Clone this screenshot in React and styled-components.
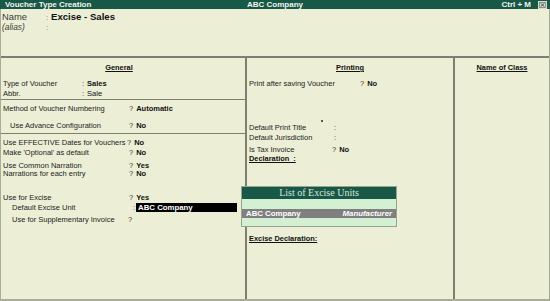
import React from 'react';
import styled, { createGlobalStyle } from 'styled-components';

const GlobalStyle = createGlobalStyle`
  html, body {
    margin: 0;
    padding: 0;
    background: #ecefd6;
  }
`;

const Screen = styled.div`
  position: relative;
  width: 550px;
  height: 301px;
  overflow: hidden;
  background: #ecefd6;
  font-family: "Liberation Sans", Arial, sans-serif;
  color: #1d1d1d;
  display: flex;
  flex-direction: column;
`;

const TitleBar = styled.div`
  height: 9px;
  background: #175846;
  color: #f2f5ee;
  display: flex;
  align-items: center;
  font-size: 8px;
  font-weight: bold;
  line-height: 9px;
  padding-left: 5px;
`;

const TitleText = styled.div`
  width: 242px;
`;

const TitleCompany = styled.div`
  flex: 1;
`;

const Shortcut = styled.div`
  margin-right: 7px;
`;

const CloseBox = styled.div`
  width: 9px;
  height: 8px;
  background: #d8dcd0;
  margin-right: 3px;
  display: flex;
  align-items: center;
  justify-content: center;
`;

const Frame = styled.div`
  flex: 1;
  display: flex;
  flex-direction: column;
  border-left: 1px solid #a9ad98;
  border-right: 1px solid #a9ad98;
  border-bottom: 2px solid #a9ad98;
`;

const Header = styled.div`
  height: 49px;
  padding: 3px 0 0 1px;
  box-sizing: border-box;
  border-bottom: 2px solid #7c8070;
`;

const NameRow = styled.div`
  display: flex;
  align-items: baseline;
  height: ${p => p.$h || 10}px;
  line-height: ${p => p.$h || 10}px;
`;

const NameLabel = styled.div`
  width: 44px;
  font-size: ${p => (p.$alias ? 8.4 : 9.4)}px;
  font-style: ${p => (p.$alias ? 'italic' : 'normal')};
  color: #3a3a3a;
`;

const Colon = styled.span`
  color: #777;
  font-size: 8px;
  width: 5px;
`;

const NameValue = styled.div`
  font-size: 9.6px;
  font-weight: bold;
  color: #111;
`;

const Columns = styled.div`
  flex: 1;
  display: flex;
`;

const Column = styled.div`
  width: ${p => p.$w ? `${p.$w}px` : 'auto'};
  flex: ${p => p.$w ? 'none' : 1};
  border-right: ${p => p.$last ? 'none' : '2px solid #7c8070'};
  display: flex;
  flex-direction: column;
  box-sizing: border-box;
`;

const Section = styled.div`
  padding: ${p => p.$pt || 0}px 0 ${p => p.$pb || 0}px;
  border-bottom: ${p => p.$line ? '1px solid #7c8070' : 'none'};
`;

const Heading = styled.div`
  text-align: center;
  font-size: 7.4px;
  font-weight: bold;
  text-decoration: underline;
  line-height: 10px;
  height: 10px;
  padding-right: ${p => p.$shift || 0}px;
  color: #111;
`;

const Row = styled.div`
  display: flex;
  align-items: center;
  height: ${p => p.$h || 10}px;
  margin-top: ${p => p.$mt || 0}px;
  padding-left: ${p => p.$indent || 2}px;
  font-size: 7.5px;
  white-space: nowrap;
`;

const Label = styled.div`
  width: ${p => p.$w}px;
  flex: none;
  color: #222;
`;

const Mark = styled.span`
  color: #333;
  margin-right: 3px;
`;

const Value = styled.span`
  font-weight: ${p => (p.$plain ? 'normal' : 'bold')};
  color: #111;
`;

const Selected = styled.span`
  display: inline-block;
  margin-left: -2px;
  width: 101px;
  height: 9px;
  line-height: 9px;
  background: #000;
  color: #fff;
  font-weight: bold;
  font-size: 7.8px;
  padding-left: 2px;
  box-sizing: border-box;
`;

const SubHeading = styled.div`
  font-size: 7.4px;
  font-weight: bold;
  text-decoration: underline;
  line-height: 10px;
  height: 10px;
  margin-top: ${p => p.$mt || 0}px;
  padding-left: 2px;
  color: #111;
`;

const Speck = styled.div`
  width: 2px;
  height: 2px;
  background: #555;
  margin: 32px 0 0 74px;
`;

const Popup = styled.div`
  position: absolute;
  left: 241px;
  top: 186px;
  width: 156px;
  border: 1px solid #96a493;
  background: #d4f0d2;
  display: flex;
  flex-direction: column;
  box-sizing: border-box;
`;

const PopupTitle = styled.div`
  height: 12px;
  line-height: 12px;
  background: #175846;
  color: #dce6dc;
  font-family: "Liberation Serif", "Times New Roman", serif;
  font-size: 10px;
  text-align: center;
`;

const PopupRow = styled.div`
  height: ${p => p.$h}px;
  display: flex;
  align-items: center;
  justify-content: space-between;
  padding: 0 4px;
  background: ${p => (p.$active ? '#7f7f7f' : '#d4f0d2')};
  color: #fff;
  font-size: 7.8px;
  font-weight: bold;
`;

const Kind = styled.span`
  font-style: italic;
`;

export default function App() {
  return (
    <>
      <GlobalStyle />
      <Screen>
        <TitleBar>
          <TitleText>Voucher Type Creation</TitleText>
          <TitleCompany>ABC Company</TitleCompany>
          <Shortcut>Ctrl + M</Shortcut>
          <CloseBox>
            <svg width="7" height="6" viewBox="0 0 7 6">
              <rect x="0.5" y="0.5" width="6" height="5" fill="none" stroke="#7a7f78" strokeWidth="0.8" />
              <path d="M1.6 1.3 L5.4 4.7 M5.4 1.3 L1.6 4.7" stroke="#3d433f" strokeWidth="0.9" />
            </svg>
          </CloseBox>
        </TitleBar>
        <Frame>
          <Header>
            <NameRow $h={10}>
              <NameLabel>Name</NameLabel>
              <Colon>:</Colon>
              <NameValue>Excise - Sales</NameValue>
            </NameRow>
            <NameRow $h={10}>
              <NameLabel $alias>(alias)</NameLabel>
              <Colon>:</Colon>
            </NameRow>
          </Header>
          <Columns>
            <Column $w={246}>
              <Section $pt={5} $pb={1} $line>
                <Heading $shift={8}>General</Heading>
                <Row $mt={5}>
                  <Label $w={79}>Type of Voucher</Label>
                  <Mark>:</Mark><Value>Sales</Value>
                </Row>
                <Row>
                  <Label $w={79}>Abbr.</Label>
                  <Mark>:</Mark><Value $plain>Sale</Value>
                </Row>
              </Section>
              <Section $pt={3} $pb={3} $line>
                <Row>
                  <Label $w={126}>Method of Voucher Numbering</Label>
                  <Mark>?</Mark><Value>Automatic</Value>
                </Row>
                <Row $mt={7} $indent={9}>
                  <Label $w={119}>Use Advance Configuration</Label>
                  <Mark>?</Mark><Value>No</Value>
                </Row>
              </Section>
              <Section $pt={3}>
                <Row>
                  <Label $w={124}>Use EFFECTIVE Dates for Vouchers</Label>
                  <Mark>?</Mark><Value>No</Value>
                </Row>
                <Row>
                  <Label $w={126}>Make 'Optional' as default</Label>
                  <Mark>?</Mark><Value>No</Value>
                </Row>
                <Row $mt={4} $h={8}>
                  <Label $w={126}>Use Common Narration</Label>
                  <Mark>?</Mark><Value>Yes</Value>
                </Row>
                <Row $h={8}>
                  <Label $w={126}>Narrations for each entry</Label>
                  <Mark>?</Mark><Value>No</Value>
                </Row>
                <Row $mt={15}>
                  <Label $w={126}>Use for Excise</Label>
                  <Mark>?</Mark><Value>Yes</Value>
                </Row>
                <Row $indent={11}>
                  <Label $w={121}>Default Excise Unit</Label>
                  <Mark>:</Mark>
                  <Selected>ABC Company</Selected>
                </Row>
                <Row $mt={2} $indent={11}>
                  <Label $w={116}>Use for Supplementary Invoice</Label>
                  <Mark>?</Mark>
                </Row>
              </Section>
            </Column>
            <Column $w={208}>
              <Section $pt={5}>
                <Heading>Printing</Heading>
                <Row $mt={5}>
                  <Label $w={111}>Print after saving Voucher</Label>
                  <Mark>?</Mark><Value>No</Value>
                </Row>
                <Speck />
                <Row>
                  <Label $w={85}>Default Print Title</Label>
                  <Mark>:</Mark>
                </Row>
                <Row>
                  <Label $w={85}>Default Jurisdiction</Label>
                  <Mark>:</Mark>
                </Row>
                <Row $mt={2}>
                  <Label $w={83}>Is Tax Invoice</Label>
                  <Mark>?</Mark><Value>No</Value>
                </Row>
                <SubHeading>Declaration&nbsp;&nbsp;:</SubHeading>
                <SubHeading $mt={70}>Excise Declaration:</SubHeading>
              </Section>
            </Column>
            <Column $last>
              <Section $pt={5}>
                <Heading>Name of Class</Heading>
              </Section>
            </Column>
          </Columns>
        </Frame>
        <Popup>
          <PopupTitle>List of Excise Units</PopupTitle>
          <PopupRow $h={10} />
          <PopupRow $h={9} $active>
            <span>ABC Company</span>
            <Kind>Manufacturer</Kind>
          </PopupRow>
          <PopupRow $h={8} />
        </Popup>
      </Screen>
    </>
  );
}
